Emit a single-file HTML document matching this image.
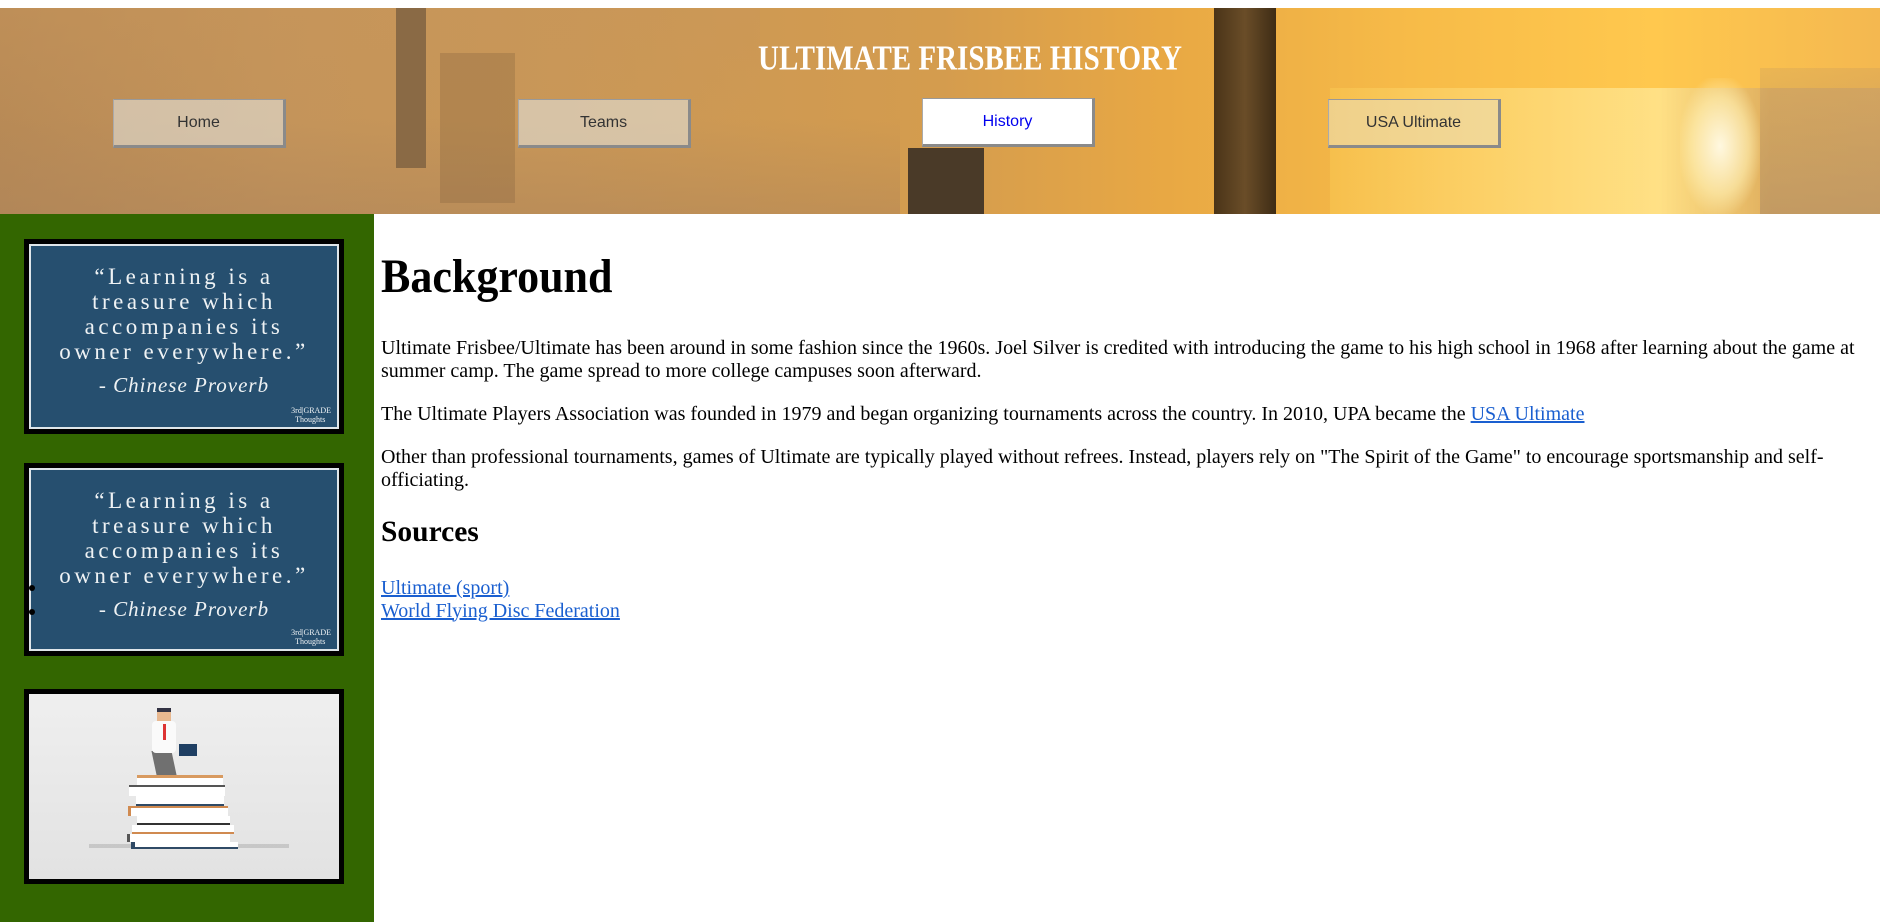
<!DOCTYPE html>
<html><head><meta charset="utf-8"><style>
*{margin:0;padding:0;box-sizing:border-box}
body{width:1880px;height:922px;overflow:hidden;background:#fff;font-family:"Liberation Serif",serif;position:relative}
#hdr{position:absolute;left:0;top:8px;width:1880px;height:206px;overflow:hidden;
background:linear-gradient(90deg,#b88a56 0%,#c4945a 15%,#c99757 30%,#d49c4e 50%,#e8a844 62%,#f7bb48 75%,#ffc84e 88%,#f4b850 100%)}
.ly{position:absolute}
.btn{position:absolute;top:99px;width:173px;height:49px;background:rgba(225,222,215,.62);border-right:3px solid #8a8a8a;border-bottom:3px solid #8a8a8a;border-top:1px solid #999;border-left:1px solid #aaa;font:16px "Liberation Sans",sans-serif;color:#333;text-align:center;line-height:45px}
#side{position:absolute;left:0;top:214px;width:374px;height:708px;background:#336600}
.fr{position:absolute;left:24px;width:320px;border:5px solid #000}
.q{background:#264f6f;height:100%;border:2px solid #dfe6ea;color:#eef2f4;text-align:center;font-family:"Liberation Serif",serif;font-size:23px;letter-spacing:3.5px;line-height:25px;padding-top:18px;position:relative;white-space:nowrap}
.q .pv{font-style:italic;font-size:21px;letter-spacing:1px;margin-top:9px}
.q .g{position:absolute;right:6px;bottom:3px;font-size:8px;letter-spacing:0;line-height:9px;text-align:left}
.c{position:absolute;left:381px;color:#000}
p.c{font-size:20px;line-height:22.5px;white-space:nowrap}
a{color:#1a5fd0;text-decoration:underline}
</style></head><body>
<div id="hdr">
 <div class="ly" style="left:0;top:0;width:760px;height:120px;background:linear-gradient(180deg,rgba(200,150,90,.4),rgba(150,110,70,.0))"></div>
 <div class="ly" style="left:0;top:110px;width:900px;height:96px;background:linear-gradient(180deg,rgba(150,110,70,.0),rgba(170,130,90,.45))"></div>
 <div class="ly" style="left:1330px;top:80px;width:550px;height:126px;background:linear-gradient(90deg,rgba(255,215,90,.3),rgba(255,240,170,.6) 60%,rgba(200,160,110,.5) 80%)"></div>
 <div class="ly" style="left:1680px;top:70px;width:80px;height:136px;background:radial-gradient(ellipse at center,#fff8e0 0%,rgba(255,240,180,.6) 50%,rgba(255,220,120,0) 75%)"></div>
 <div class="ly" style="left:1760px;top:60px;width:120px;height:146px;background:linear-gradient(180deg,rgba(175,140,100,.2),rgba(175,140,100,.6))"></div>
 <div class="ly" style="left:440px;top:45px;width:75px;height:150px;background:rgba(130,95,60,.3)"></div>
 <div class="ly" style="left:396px;top:0;width:30px;height:160px;background:#8a6a45"></div>
 <div class="ly" style="left:1214px;top:0;width:62px;height:206px;background:linear-gradient(90deg,#4a3418,#6a4d28,#3e2c15)"></div>
 <div class="ly" style="left:908px;top:140px;width:76px;height:66px;background:#4a3a28"></div>
 <div style="position:absolute;left:0;top:35px;width:1940px;text-align:center;color:#fff;font:bold 29px 'Liberation Serif',serif;transform:scaleY(1.2)">ULTIMATE FRISBEE HISTORY</div>
</div>
<div class="btn" style="left:113px">Home</div>
<div class="btn" style="left:518px">Teams</div>
<div class="btn" style="left:922px;top:98px;background:#fff;color:#0000ee">History</div>
<div class="btn" style="left:1328px;background:rgba(235,220,180,.6)">USA Ultimate</div>

<div id="side">
 <div class="fr" style="top:25px;height:195px"><div class="q">“Learning is a<br>treasure which<br>accompanies its<br>owner everywhere.”<div class="pv">- Chinese Proverb</div><div class="g">3rd|GRADE<br>&nbsp;&nbsp;Thoughts</div></div></div>
 <div class="fr" style="top:249px;height:193px"><div class="q">“Learning is a<br>treasure which<br>accompanies its<br>owner everywhere.”<div class="pv">- Chinese Proverb</div><div class="g">3rd|GRADE<br>&nbsp;&nbsp;Thoughts</div></div></div>
 <div class="fr" style="top:475px;height:195px;background:linear-gradient(180deg,#efefef,#e2e2e2)">
  <div style="position:absolute;left:60px;top:150px;width:200px;height:4px;background:rgba(180,180,180,.6)"></div>
  <div style="position:absolute;left:102px;top:148px;width:107px;height:7px;background:#fff;border-left:4px solid #2f4a66;border-bottom:2px solid #2f4a66"></div>
  <div style="position:absolute;left:98px;top:140px;width:103px;height:8px;background:#fff;border-left:3px solid #555"></div>
  <div style="position:absolute;left:103px;top:131px;width:102px;height:9px;background:#fff;border-bottom:2px solid #d08a50"></div>
  <div style="position:absolute;left:108px;top:122px;width:93px;height:9px;background:#fff;border-bottom:2px solid #333"></div>
  <div style="position:absolute;left:99px;top:112px;width:100px;height:10px;background:#fff;border-top:2px solid #d08a50;border-left:3px solid #d08a50"></div>
  <div style="position:absolute;left:107px;top:102px;width:88px;height:10px;background:#fff;border-bottom:2px solid #2f4a66"></div>
  <div style="position:absolute;left:100px;top:91px;width:96px;height:11px;background:#fff;border-top:2px solid #555"></div>
  <div style="position:absolute;left:108px;top:81px;width:86px;height:10px;background:#fff;border-top:3px solid #d89a60"></div>
  <div style="position:absolute;left:125px;top:57px;width:20px;height:24px;background:#707070;transform:skewX(12deg)"></div>
  <div style="position:absolute;left:123px;top:27px;width:24px;height:32px;background:#fafafa;border-radius:4px"></div>
  <div style="position:absolute;left:134px;top:30px;width:3px;height:16px;background:#d33"></div>
  <div style="position:absolute;left:128px;top:14px;width:14px;height:13px;background:#e8b890;border-top:4px solid #334"></div>
  <div style="position:absolute;left:150px;top:50px;width:18px;height:12px;background:#1f3f63"></div>
 </div>
</div>
<div style="position:absolute;left:29px;top:585px;width:6px;height:6px;border-radius:50%;background:#000"></div>
<div style="position:absolute;left:29px;top:609px;width:6px;height:6px;border-radius:50%;background:#000"></div>

<h1 class="c" style="top:250px;font-size:44px;line-height:50px;transform:scaleY(1.08);transform-origin:left top">Background</h1>
<p class="c" style="top:337px">Ultimate Frisbee/Ultimate has been around in some fashion since the 1960s. Joel Silver is credited with introducing the game to his high school in 1968 after learning about the game at<br>summer camp. The game spread to more college campuses soon afterward.</p>
<p class="c" style="top:403px">The Ultimate Players Association was founded in 1979 and began organizing tournaments across the country. In 2010, UPA became the <a>USA Ultimate</a></p>
<p class="c" style="top:446px">Other than professional tournaments, games of Ultimate are typically played without refrees. Instead, players rely on "The Spirit of the Game" to encourage sportsmanship and self-<br>officiating.</p>
<h2 class="c" style="top:515px;font-size:29.5px;line-height:34px">Sources</h2>
<p class="c" style="top:577px"><a>Ultimate (sport)</a><br><a>World Flying Disc Federation</a></p>
</body></html>
